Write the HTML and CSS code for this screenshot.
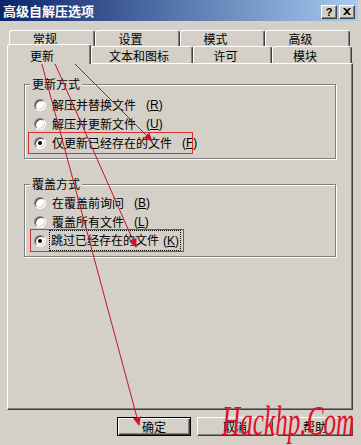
FILE: index.html
```html
<!doctype html>
<html>
<head>
<meta charset="utf-8">
<link rel="stylesheet" href="styles.css">
</head>
<body>
<div class="window">
  <div class="titlebar">
    <span class="title">高级自解压选项</span>
    <div class="caption-btns">
      <span class="cap-btn help">?</span>
      <span class="cap-btn"><svg width="8" height="7" viewBox="0 0 8 7"><path d="M0 0h2l2 2 2-2h2L5 3.5 8 7H6L4 5 2 7H0l3-3.5z" fill="#000"/></svg></span>
    </div>
  </div>

  <div class="tabs">
    <div class="tab-row row-back">
      <div class="tab w86">常规</div>
      <div class="tab w85">设置</div>
      <div class="tab w85">模式</div>
      <div class="tab w85">高级</div>
    </div>
    <div class="tab-row row-front">
      <div class="tab active">更新</div>
      <div class="tab text-tab">文本和图标</div>
      <div class="tab w79">许可</div>
      <div class="tab w80">模块</div>
    </div>
  </div>

  <div class="panel">
    <div class="group">
      <span class="legend">更新方式</span>
      <label class="radio"><span class="dot"></span>解压并替换文件<span class="key">(<u>R</u>)</span></label>
      <label class="radio"><span class="dot"></span>解压并更新文件<span class="key">(<u>U</u>)</span></label>
      <label class="radio"><span class="dot on"></span>仅更新已经存在的文件<span class="key">(<u>F</u>)</span></label>
    </div>
    <div class="group second">
      <span class="legend">覆盖方式</span>
      <label class="radio"><span class="dot"></span>在覆盖前询问<span class="key">(<u>B</u>)</span></label>
      <label class="radio"><span class="dot"></span>覆盖所有文件<span class="key">(<u>L</u>)</span></label>
      <label class="radio"><span class="dot on"></span><span class="focus">跳过已经存在的文件<span class="key">(<u>K</u>)</span></span></label>
    </div>
  </div>

  <div class="buttons">
    <span class="btn default">确定</span>
    <span class="btn">取消</span>
    <span class="btn">帮助</span>
  </div>

  <!-- red annotations drawn over the dialog -->
  <svg class="marks" width="361" height="445" viewBox="0 0 361 445">
    <defs>
      <marker id="ah" markerWidth="9" markerHeight="8" refX="8" refY="4" orient="auto" markerUnits="userSpaceOnUse">
        <path d="M0 0L9 4L0 8z" fill="#d0102a"/>
      </marker>
    </defs>
    <rect x="28.5" y="132.5" width="164" height="21" fill="none" stroke="#d83030"/>
    <rect x="30.5" y="229.5" width="153" height="22" fill="none" stroke="#d83030"/>
    <line x1="40" y1="57" x2="139" y2="425" stroke="#c8102e" marker-end="url(#ah)"/>
    <line x1="52" y1="57" x2="136" y2="247" stroke="#c8102e" marker-end="url(#ah)"/>
    <line x1="68" y1="57" x2="152" y2="141" stroke="#c8102e" marker-end="url(#ah)"/>
  </svg>

  <div class="watermark">Hackhp.Com</div>
</div>
</body>
</html>
```

FILE: styles.css
```css
html, body { margin: 0; }

.window {
  width: 361px; height: 445px; position: relative; overflow: hidden;
  background: #d4d0c8; color: #000;
  font: 12px "Noto Sans CJK SC", sans-serif;
}

/* title bar */
.titlebar {
  height: 21px; margin-right: 3px; padding: 0 3px;
  display: flex; align-items: center; justify-content: space-between;
  background: linear-gradient(to right, #0a246a, #a6caf0);
}
.title { color: #fff; font-weight: bold; font-size: 13px; line-height: 21px; }
.caption-btns { display: flex; gap: 2px; margin-top: 2px; }
.cap-btn {
  width: 16px; height: 14px; box-sizing: border-box;
  display: flex; align-items: center; justify-content: center;
  background: #d4d0c8;
  border: 1px solid; border-color: #fff #404040 #404040 #fff;
  box-shadow: inset -1px -1px #808080;
}
.cap-btn.help { font: bold 11px "Liberation Sans", sans-serif; }

/* tabs */
.tabs { padding-top: 9px; }
.tab-row { display: flex; }
.row-back { padding-left: 9px; height: 16px; }
.row-front { padding-left: 7px; height: 17px; align-items: flex-end; }

.tab {
  box-sizing: border-box; height: 100%;
  border: 1px solid #fff; border-right-color: #404040; border-bottom: none;
  border-radius: 3px 3px 0 0;
  box-shadow: inset -1px 0 #808080;
  background: #d4d0c8;
  text-align: center; padding-right: 14px;
  line-height: 16px;
}
.row-front .tab { line-height: 17px; height: 17px; }
.w86 { width: 86px; }
.w85 { width: 85px; }
.w79 { width: 79px; }
.w80 { width: 80px; }
.text-tab { width: 102px; padding-right: 6px; }
.row-front .tab.active {
  width: 84px; height: 20px; margin-bottom: -1px; padding-top: 2px;
  position: relative; z-index: 2;
}

/* page panel */
.panel {
  margin-left: 7px; width: 346px; height: 347px; box-sizing: border-box;
  border: 1px solid; border-color: #fff #404040 #404040 #fff;
  box-shadow: inset -1px -1px #808080;
  padding: 20px 0 0 16px;
}

.group {
  position: relative; width: 312px; box-sizing: border-box;
  border: 1px solid #808080;
  box-shadow: inset 1px 1px #fff, 1px 1px #fff;
  padding: 10px 0 6px 9px;
}
.group.second { margin-top: 25px; padding-top: 8px; }
.legend {
  position: absolute; top: -9px; left: 5px;
  padding: 0 2px; line-height: 16px; background: #d4d0c8;
}

.radio { display: flex; align-items: center; height: 19px; gap: 6px; white-space: nowrap; }
.key { font-family: "Liberation Sans", sans-serif; font-size: 12px; margin-left: 4px; }
.key u { text-decoration-thickness: 1px; text-underline-offset: 1px; }
.dot {
  width: 12px; height: 12px; box-sizing: border-box; border-radius: 50%;
  background: #fff;
  border: 1px solid; border-color: #808080 #fff #fff #808080;
  box-shadow: inset 1px 1px #404040, inset -1px -1px #d4d0c8;
  display: flex; align-items: center; justify-content: center;
  flex: none;
}
.dot.on::after { content: ""; width: 4px; height: 4px; border-radius: 50%; background: #000; }
.focus { border: 1px dotted #000; margin-left: -3px; padding: 0 1px; line-height: 17px; }

/* dialog buttons */
.buttons {
  display: flex; justify-content: flex-end; gap: 4px;
  padding-right: 8px; margin-top: 7px;
}
.btn {
  width: 76px; height: 19px; box-sizing: border-box;
  display: flex; align-items: center; justify-content: center;
  background: #d4d0c8;
  border: 1px solid; border-color: #fff #404040 #404040 #fff;
  box-shadow: inset -1px -1px #808080;
}
.btn.default {
  width: 74px; margin-right: 2px;
  border-color: #000;
  box-shadow: inset 1px 1px #fff, inset -1px -1px #404040, inset -2px -2px #808080;
}

/* overlays */
.marks { position: absolute; top: 0; left: 0; pointer-events: none; }
.watermark {
  position: absolute; left: 222px; top: 400px;
  font: italic 42px/1 "Liberation Serif", serif;
  color: #e0102a; white-space: nowrap;
  transform: scaleX(0.6); transform-origin: left top;
  pointer-events: none;
}
```
